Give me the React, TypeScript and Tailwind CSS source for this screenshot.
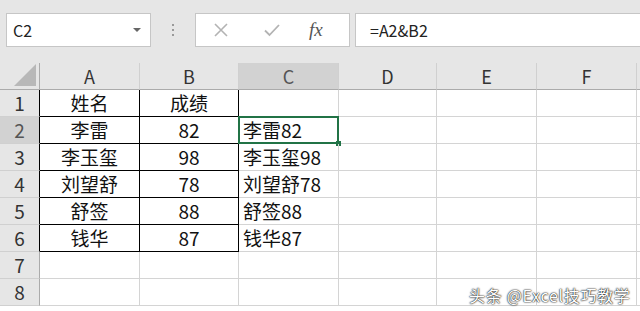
import React from 'react';

const cols = ['A', 'B', 'C', 'D', 'E', 'F'];

const data: [string, string, string][] = [
  ['姓名', '成绩', ''],
  ['李雷', '82', '李雷82'],
  ['李玉玺', '98', '李玉玺98'],
  ['刘望舒', '78', '刘望舒78'],
  ['舒签', '88', '舒签88'],
  ['钱华', '87', '钱华87'],
  ['', '', ''],
  ['', '', ''],
];

const font = { fontFamily: '"Noto Sans CJK SC", "Noto Sans", sans-serif' };

export default function App() {
  return (
    <div className="relative w-[640px] h-[311px] overflow-hidden bg-white" style={font}>
      {/* toolbar */}
      <div className="h-[63px] bg-[#e6e6e6] flex items-center pl-[6px] pb-[3px]">
        <div className="w-[145px] h-[34px] bg-white border border-[#c6c6c6] flex items-center justify-between pl-[6px] pr-[9px]">
          <span className="text-[16px] text-[#222]">C2</span>
          <span className="w-0 h-0 border-l-[4px] border-r-[4px] border-t-[4px] border-l-transparent border-r-transparent border-t-[#666]" />
        </div>
        <div className="w-[44px] flex flex-col items-center gap-[3px]">
          <span className="w-[2px] h-[2px] bg-[#999]" />
          <span className="w-[2px] h-[2px] bg-[#999]" />
          <span className="w-[2px] h-[2px] bg-[#999]" />
        </div>
        <div className="w-[155px] h-[34px] bg-white border border-[#c6c6c6] flex items-center">
          <svg className="ml-[17px]" width="16" height="16" viewBox="0 0 16 16">
            <path d="M2 2L14 14M14 2L2 14" stroke="#b3b3b3" strokeWidth="1.6" fill="none" />
          </svg>
          <svg className="ml-[34px]" width="18" height="16" viewBox="0 0 18 16">
            <path d="M2 8.5L6.5 13L16 3" stroke="#b3b3b3" strokeWidth="1.8" fill="none" />
          </svg>
          <span className="ml-[28px] text-[19px] italic text-[#555]" style={{ fontFamily: '"Liberation Serif", serif' }}>
            fx
          </span>
        </div>
        <div className="ml-[5px] flex-1 h-[34px] bg-white border border-[#c6c6c6] border-r-0 flex items-center pl-[14px]">
          <span className="text-[16px] text-[#222]">=A2&amp;B2</span>
        </div>
      </div>

      {/* sheet */}
      <div className="grid grid-cols-[40px_100px_99px_100px_98px_100px_100px_100px] auto-rows-[27px]">
        {/* header row */}
        <div className="bg-[#e6e6e6] border-r border-b border-[#ababab] relative">
          <span
            className="absolute right-[3px] bottom-[3px] w-0 h-0"
            style={{ borderBottom: '0', borderRight: '22px solid #b8b8b8', borderTop: '22px solid transparent', borderLeft: '0' }}
          />
        </div>
        {cols.map((c) => (
          <div
            key={c}
            className={`flex items-center justify-center text-[18px] border-r border-b border-r-[#d0d0d0] border-b-[#ababab] ${
              c === 'C' ? 'bg-[#d2d2d2] text-[#555]' : 'bg-[#e6e6e6] text-[#333]'
            }`}
          >
            {c}
          </div>
        ))}
        <div className="bg-[#e6e6e6] border-b border-[#ababab]" />

        {data.map((row, i) => {
          const inTable = i < 6;
          const sel = i === 1;
          return (
            <React.Fragment key={i}>
              <div
                className={`flex items-center justify-center text-[19px] border-b border-b-[#d0d0d0] border-r ${
                  inTable ? 'border-r-black' : 'border-r-[#ababab]'
                } ${sel ? 'bg-[#d2d2d2] text-[#555]' : 'bg-[#e6e6e6] text-[#333]'}`}
              >
                {i + 1}
              </div>
              <div
                className={`flex items-center justify-center text-[19px] text-[#111] border-r border-b ${
                  inTable ? 'border-r-black border-b-black' : 'border-r-[#d4d4d4] border-b-[#d4d4d4]'
                }`}
              >
                {row[0]}
              </div>
              <div
                className={`flex items-center justify-center text-[19px] text-[#111] border-r border-b ${
                  inTable ? 'border-r-black border-b-black' : 'border-r-[#d4d4d4] border-b-[#d4d4d4]'
                }`}
              >
                {row[1]}
              </div>
              <div className="relative flex items-center pl-[4px] text-[19px] text-[#111] border-r border-b border-[#d4d4d4] whitespace-nowrap">
                {row[2]}
                {sel && (
                  <>
                    <span className="absolute -left-[1px] -top-[1px] -right-[1px] -bottom-[1px] border-2 border-[#217346]" />
                    <span className="absolute -right-[3px] -bottom-[3px] w-[5px] h-[5px] bg-[#217346]" />
                  </>
                )}
              </div>
              <div className="border-r border-b border-[#d4d4d4]" />
              <div className="border-r border-b border-[#d4d4d4]" />
              <div className="border-r border-b border-[#d4d4d4]" />
              <div className="border-b border-[#d4d4d4]" />
            </React.Fragment>
          );
        })}
      </div>

      {/* watermark */}
      <div className="absolute left-[469px] top-[283px] text-[16px] tracking-[0.7px] text-white [text-shadow:0_0_2px_#000,0_0_1px_#000]">
        头条 @Excel技巧教学
      </div>
    </div>
  );
}
